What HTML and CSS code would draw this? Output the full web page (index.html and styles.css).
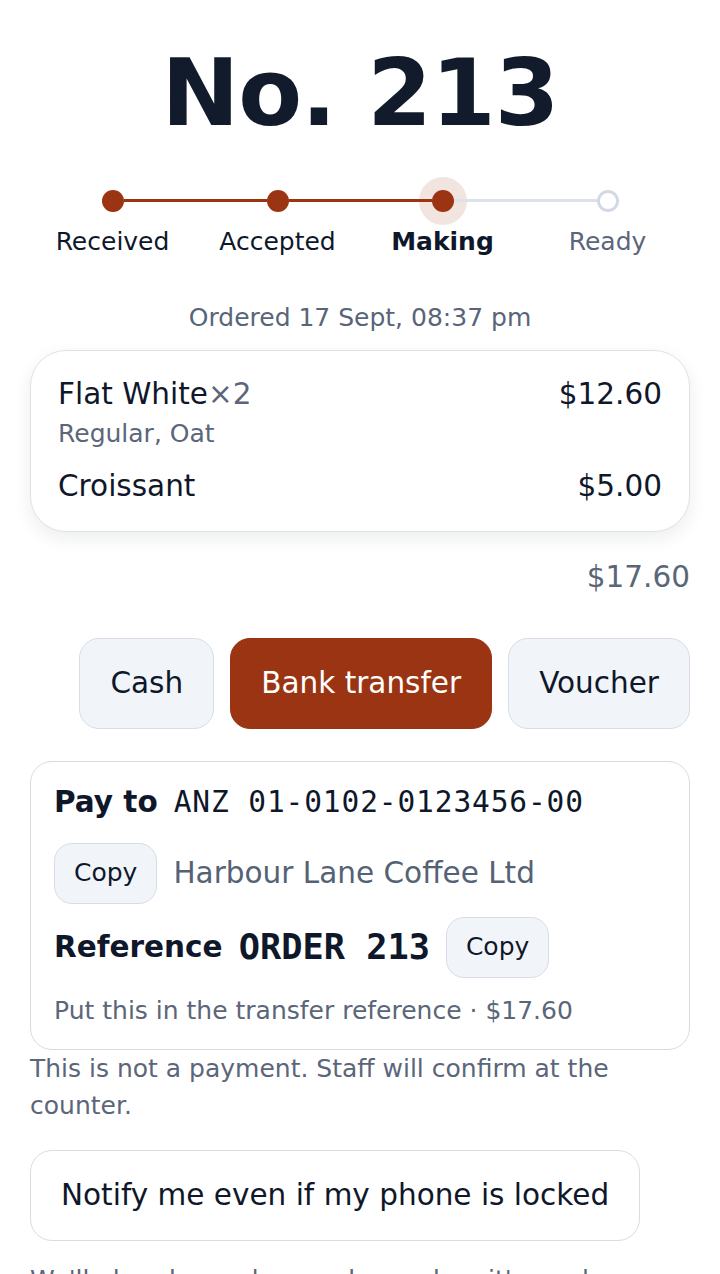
FILE: index.html
```html
<!DOCTYPE html>
<html lang="en">
<head>
<meta charset="utf-8">
<title>Order 213</title>
<link rel="stylesheet" href="styles.css">
</head>
<body>
<main class="page">
  <h1 class="order-no">No. 213</h1>

  <div class="stepper">
    <div class="track">
      <span class="dot done"></span>
      <span class="line done"></span>
      <span class="dot done"></span>
      <span class="line done"></span>
      <span class="dot current"></span>
      <span class="line"></span>
      <span class="dot todo"></span>
    </div>
    <div class="labels">
      <span class="label">Received</span>
      <span class="label">Accepted</span>
      <span class="label active">Making</span>
      <span class="label muted">Ready</span>
    </div>
  </div>

  <p class="ordered">Ordered 17 Sept, 08:37 pm</p>

  <section class="items">
    <div class="item">
      <div class="item-main">
        <span class="item-name">Flat White<span class="qty">×2</span></span>
        <span class="item-price">$12.60</span>
      </div>
      <div class="item-mods">Regular, Oat</div>
    </div>
    <div class="item item-last">
      <div class="item-main">
        <span class="item-name">Croissant</span>
        <span class="item-price">$5.00</span>
      </div>
    </div>
  </section>

  <div class="total">$17.60</div>

  <div class="methods">
    <button class="method">Cash</button>
    <button class="method selected">Bank transfer</button>
    <button class="method">Voucher</button>
  </div>

  <section class="pay">
    <div class="pay-row">
      <strong class="pay-label">Pay to</strong>
      <span class="account">ANZ 01-0102-0123456-00</span>
      <button class="copy">Copy</button>
      <span class="payee">Harbour Lane Coffee Ltd</span>
    </div>
    <div class="ref-row">
      <strong class="pay-label">Reference</strong>
      <span class="ref-code">ORDER 213</span>
      <button class="copy">Copy</button>
    </div>
    <p class="pay-note">Put this in the transfer reference · $17.60</p>
  </section>
  <p class="disclaimer">This is not a payment. Staff will confirm at the counter.</p>

  <button class="notify">Notify me even if my phone is locked</button>

  <p class="footnote">We'll also show a banner here when it's ready.</p>
</main>
</body>
</html>
```

FILE: styles.css
```css
* { box-sizing: border-box; }

html, body {
  margin: 0;
  padding: 0;
  background: #ffffff;
}

body {
  font-family: "DejaVu Sans", "Noto Sans", sans-serif;
  color: #0f172a;
}

.page {
  padding: 38px 30px 0;
}

.order-no {
  margin: 0;
  font-size: 93px;
  line-height: 1.2;
  font-weight: 700;
  text-align: center;
  color: #111b2b;
  letter-spacing: -0.01em;
}

/* stepper */
.stepper {
  margin-top: 40px;
}

.track {
  display: flex;
  align-items: center;
  padding: 0 71.5px;
  height: 22px;
}

.dot {
  flex: 0 0 22px;
  width: 22px;
  height: 22px;
  border-radius: 50%;
  background: #9a3412;
}

.dot.current {
  box-shadow: 0 0 0 13px rgba(154, 52, 18, 0.13);
}

.dot.todo {
  background: #ffffff;
  border: 3px solid #d3d9e4;
}

.line {
  flex: 1 1 auto;
  height: 3px;
  background: #dce1ea;
}

.line.done {
  background: #9a3412;
}

.labels {
  display: grid;
  grid-template-columns: repeat(4, 1fr);
  margin-top: 14px;
}

.label {
  text-align: center;
  font-size: 25px;
  line-height: 32px;
  color: #0f172a;
}

.label.active {
  font-weight: 700;
}

.label.muted {
  color: #5b6679;
}

.ordered {
  margin: 44px 0 0;
  text-align: center;
  font-size: 25px;
  line-height: 32px;
  color: #586579;
}

/* items card */
.items {
  margin-top: 16px;
  border: 1px solid #dde2ea;
  border-radius: 36px;
  padding: 24px 27px 26px;
  box-shadow: 0 6px 18px rgba(15, 23, 42, 0.08);
  background: #fff;
}

.item-main {
  display: flex;
  justify-content: space-between;
  align-items: baseline;
  font-size: 29.5px;
  line-height: 38px;
}

.qty {
  color: #5b6679;
}

.item-mods {
  margin-top: 5px;
  font-size: 25px;
  line-height: 32px;
  color: #5b6679;
}

.item-last {
  margin-top: 17px;
}

.total {
  margin-top: 26px;
  text-align: right;
  font-size: 29.5px;
  line-height: 38px;
  color: #5b6679;
}

/* payment method */
.methods {
  margin-top: 42px;
  display: flex;
  justify-content: flex-end;
  gap: 16px;
}

.method {
  font-family: inherit;
  font-size: 29.5px;
  line-height: 38px;
  height: 91px;
  padding: 0 30px;
  border-radius: 20px;
  border: 1.5px solid #d6dde7;
  background: #f1f5f9;
  color: #0f172a;
}

.method.selected {
  background: #9a3412;
  border-color: #9a3412;
  color: #ffffff;
}

/* bank details */
.pay {
  margin-top: 32px;
  border: 1.5px solid #d6dce6;
  border-radius: 22px;
  padding: 21px 23px 22px;
}

.pay-row,
.ref-row {
  display: flex;
  flex-wrap: wrap;
  align-items: center;
  column-gap: 16px;
}

.pay-row {
  row-gap: 22px;
}

.ref-row {
  margin-top: 13px;
}

.pay-label {
  font-size: 29.5px;
  line-height: 38px;
  font-weight: 700;
  color: #0f172a;
}

.account {
  font-family: "DejaVu Sans Mono", "Liberation Mono", monospace;
  font-size: 29.5px;
  line-height: 38px;
  letter-spacing: 0.03em;
  color: #0f172a;
}

.payee {
  font-size: 29.5px;
  line-height: 38px;
  color: #556275;
}

.ref-code {
  font-family: "DejaVu Sans Mono", "Liberation Mono", monospace;
  font-size: 35.3px;
  line-height: 40px;
  font-weight: 700;
  color: #0f172a;
}

.copy {
  font-family: inherit;
  font-size: 25px;
  line-height: 30px;
  height: 61px;
  padding: 0 19px;
  border-radius: 18px;
  border: 1.5px solid #d6dde7;
  background: #f1f5f9;
  color: #0f172a;
}

.pay-note {
  margin: 17px 0 0;
  font-size: 25px;
  line-height: 32px;
  color: #5b6679;
}

.disclaimer {
  margin: 0;
  font-size: 25px;
  line-height: 37px;
  color: #5b6679;
}

.notify {
  display: block;
  margin-top: 26px;
  font-family: inherit;
  font-size: 29.5px;
  line-height: 38px;
  height: 91px;
  padding: 0 30px;
  border-radius: 22px;
  border: 1.5px solid #d6dde7;
  background: #ffffff;
  color: #0f172a;
}

.footnote {
  margin: 20px 0 0;
  font-size: 25px;
  line-height: 37px;
  color: #5b6679;
}
```
